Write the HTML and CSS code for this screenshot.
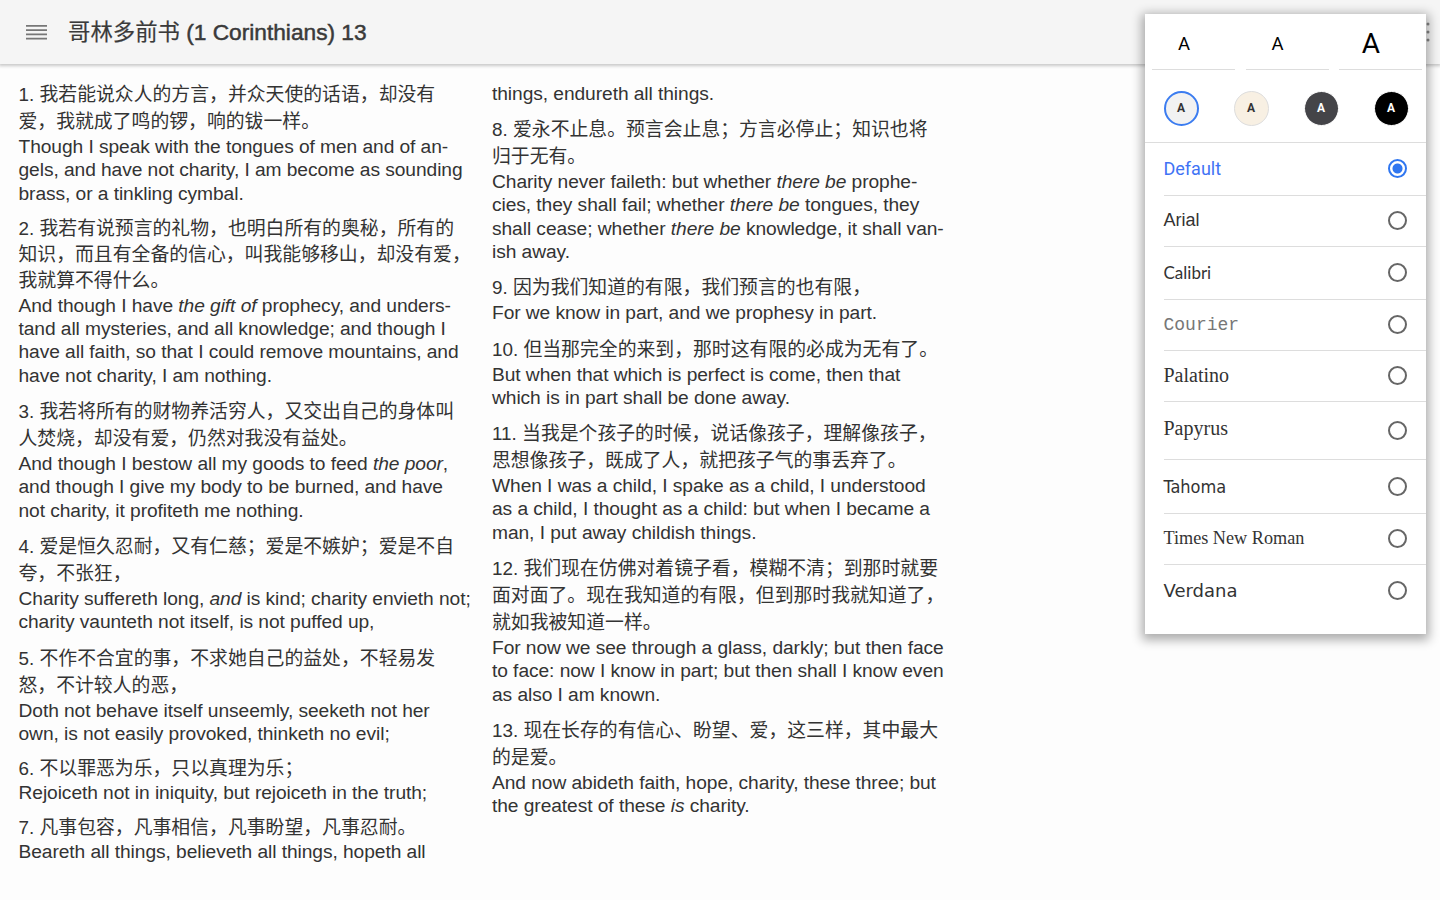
FILE: index.html
```html
<!DOCTYPE html>
<html lang="zh-CN">

<head>
  <meta charset="UTF-8">
  <title>哥林多前书 (1 Corinthians) 13</title>
  <link rel="stylesheet" href="styles.css">
</head>

<body>
  <header class="toolbar">
    <svg class="menu-icon" viewBox="0 0 22 16">
      <path d="M0 1.5h22M0 6h22M0 10.5h22M0 15h22" />
    </svg>
    <h1 class="title"><span class="title-zh">哥林多前书</span> (1 Corinthians) 13</h1>
    <svg class="more-icon" viewBox="0 0 4 22">
      <circle cx="2" cy="3" r="1.5" />
      <circle cx="2" cy="11" r="1.5" />
      <circle cx="2" cy="19" r="1.5" />
    </svg>
  </header>

  <main class="chapter">
    <div class="column">
      <div class="verse">
        <p class="zh">1. 我若能说众人的方言，并众天使的话语，却没有<br>爱，我就成了鸣的锣，响的钹一样。</p>
        <p class="en">Though I speak with the tongues of men and of an-<br>gels, and have not charity, I am become as sounding<br>brass, or a tinkling cymbal.</p>
      </div>
      <div class="verse">
        <p class="zh zh-mid">2. 我若有说预言的礼物，也明白所有的奥秘，所有的<br>知识，而且有全备的信心，叫我能够移山，却没有爱，<br>我就算不得什么。</p>
        <p class="en">And though I have <i>the gift of</i> prophecy, and unders-<br>tand all mysteries, and all knowledge; and though I<br>have all faith, so that I could remove mountains, and<br>have not charity, I am nothing.</p>
      </div>
      <div class="verse">
        <p class="zh">3. 我若将所有的财物养活穷人，又交出自己的身体叫<br>人焚烧，却没有爱，仍然对我没有益处。</p>
        <p class="en">And though I bestow all my goods to feed <i>the poor</i>,<br>and though I give my body to be burned, and have<br>not charity, it profiteth me nothing.</p>
      </div>
      <div class="verse">
        <p class="zh">4. 爱是恒久忍耐，又有仁慈；爱是不嫉妒；爱是不自<br>夸，不张狂，</p>
        <p class="en">Charity suffereth long, <i>and</i> is kind; charity envieth not;<br>charity vaunteth not itself, is not puffed up,</p>
      </div>
      <div class="verse">
        <p class="zh">5. 不作不合宜的事，不求她自己的益处，不轻易发<br>怒，不计较人的恶，</p>
        <p class="en">Doth not behave itself unseemly, seeketh not her<br>own, is not easily provoked, thinketh no evil;</p>
      </div>
      <div class="verse">
        <p class="zh zh-low">6. 不以罪恶为乐，只以真理为乐；</p>
        <p class="en">Rejoiceth not in iniquity, but rejoiceth in the truth;</p>
      </div>
      <div class="verse">
        <p class="zh zh-low">7. 凡事包容，凡事相信，凡事盼望，凡事忍耐。</p>
        <p class="en">Beareth all things, believeth all things, hopeth all</p>
      </div>
    </div>

    <div class="column">
      <div class="verse">
        <p class="en">things, endureth all things.</p>
      </div>
      <div class="verse">
        <p class="zh">8. 爱永不止息。预言会止息；方言必停止；知识也将<br>归于无有。</p>
        <p class="en">Charity never faileth: but whether <i>there be</i> prophe-<br>cies, they shall fail; whether <i>there be</i> tongues, they<br>shall cease; whether <i>there be</i> knowledge, it shall van-<br>ish away.</p>
      </div>
      <div class="verse">
        <p class="zh">9. 因为我们知道的有限，我们预言的也有限，</p>
        <p class="en">For we know in part, and we prophesy in part.</p>
      </div>
      <div class="verse">
        <p class="zh">10. 但当那完全的来到，那时这有限的必成为无有了。</p>
        <p class="en">But when that which is perfect is come, then that<br>which is in part shall be done away.</p>
      </div>
      <div class="verse">
        <p class="zh">11. 当我是个孩子的时候，说话像孩子，理解像孩子，<br>思想像孩子，既成了人，就把孩子气的事丢弃了。</p>
        <p class="en">When I was a child, I spake as a child, I understood<br>as a child, I thought as a child: but when I became a<br>man, I put away childish things.</p>
      </div>
      <div class="verse">
        <p class="zh">12. 我们现在仿佛对着镜子看，模糊不清；到那时就要<br>面对面了。现在我知道的有限，但到那时我就知道了，<br>就如我被知道一样。</p>
        <p class="en">For now we see through a glass, darkly; but then face<br>to face: now I know in part; but then shall I know even<br>as also I am known.</p>
      </div>
      <div class="verse">
        <p class="zh">13. 现在长存的有信心、盼望、爱，这三样，其中最大<br>的是爱。</p>
        <p class="en">And now abideth faith, hope, charity, these three; but<br>the greatest of these <i>is</i> charity.</p>
      </div>
    </div>
  </main>

  <div class="popover">
    <div class="sizes">
      <div class="size">A</div>
      <div class="size">A</div>
      <div class="size size-large">A</div>
    </div>
    <div class="themes">
      <div class="theme theme-white">A</div>
      <div class="theme theme-sepia">A</div>
      <div class="theme theme-gray">A</div>
      <div class="theme theme-black">A</div>
    </div>
    <ul class="fonts">
      <li class="font font-default selected"><span>Default</span><i class="radio"></i></li>
      <li class="font font-arial"><span>Arial</span><i class="radio"></i></li>
      <li class="font font-calibri"><span>Calibri</span><i class="radio"></i></li>
      <li class="font font-courier"><span>Courier</span><i class="radio"></i></li>
      <li class="font font-palatino"><span>Palatino</span><i class="radio"></i></li>
      <li class="font font-papyrus"><span>Papyrus</span><i class="radio"></i></li>
      <li class="font font-tahoma"><span>Tahoma</span><i class="radio"></i></li>
      <li class="font font-times"><span>Times New Roman</span><i class="radio"></i></li>
      <li class="font font-verdana"><span>Verdana</span><i class="radio"></i></li>
    </ul>
  </div>
</body>

</html>
```
FILE: styles.css
```css
* {
  box-sizing: border-box;
}

body {
  margin: 0;
  height: 900px;
  overflow: hidden;
  background: #fdfdfd;
  color: #333;
  font-family: "Liberation Sans", "Noto Sans CJK SC", sans-serif;
}

.toolbar {
  display: flex;
  align-items: center;
  height: 64px;
  padding: 0 10px 0 26px;
  background: #f5f5f5;
  box-shadow: 0 1px 3px 1px #c8c8c8;
}

.menu-icon {
  width: 21px;
  height: 16px;
  margin-right: 21px;
  stroke: #777;
  stroke-width: 1.8;
}

.title {
  margin: 0;
  padding-bottom: 4px;
  font-size: 22.7px;
  font-weight: normal;
  white-space: nowrap;
  color: #3a3a3a;
  -webkit-text-stroke: 0.5px #3a3a3a;
}

.title-zh {
  font-size: 22.4px;
  -webkit-text-stroke: 0.2px #444;
}

.more-icon {
  width: 4px;
  height: 22px;
  margin-left: auto;
  fill: #888;
}

.chapter {
  display: grid;
  grid-template-columns: 473.5px 473.5px;
  padding: 17px 0 0 18.5px;
}

.verse {
  margin-bottom: 11px;
}

.verse p {
  margin: 0;
  white-space: nowrap;
}

.verse .zh {
  font-size: 18.85px;
  line-height: 27px;
}

.verse .zh-mid {
  line-height: 26px;
}

.verse .zh-low {
  line-height: 25px;
}

.verse .en {
  font-size: 19.2px;
  line-height: 23.3px;
  letter-spacing: -0.07px;
}

.column + .column {
  padding-top: 0.8px;
}

/* reading settings */
.popover {
  position: absolute;
  top: 14px;
  left: 1145px;
  width: 281px;
  height: 620px;
  background: #fff;
  box-shadow: 0 3px 10px 3px rgba(0, 0, 0, 0.32);
}

.sizes {
  display: grid;
  grid-template-columns: repeat(3, 83px);
  gap: 10.5px;
  height: 56px;
  padding-left: 7px;
}

.size {
  height: 56px;
  padding-right: 19px;
  border-bottom: 1px solid #ddd;
  color: #000;
  font-family: Roboto, sans-serif;
  font-size: 18.5px;
  line-height: 60px;
  text-align: center;
}

.size-large {
  font-size: 28px;
}

.themes {
  display: flex;
  justify-content: space-between;
  align-items: center;
  height: 73px;
  padding: 4px 17.5px 0 18.5px;
  border-bottom: 1px solid #ddd;
}

.theme {
  width: 35px;
  height: 35px;
  border: 1px solid #ddd;
  border-radius: 50%;
  color: #333;
  font-family: Roboto, sans-serif;
  font-size: 12px;
  font-weight: bold;
  line-height: 33px;
  text-align: center;
}

.theme-white {
  border: 2px solid #3b7cf0;
  background: #f2f2f2;
  line-height: 31px;
}

.theme-sepia {
  background: #f8f0e3;
}

.theme-gray {
  border-color: #fff;
  background: #444448;
  color: #fff;
}

.theme-black {
  border-color: #fff;
  background: #000;
  color: #fff;
}

.fonts {
  margin: 0;
  padding: 0 0 0 18.5px;
  list-style: none;
}

.font {
  display: flex;
  align-items: center;
  justify-content: space-between;
  height: 52px;
  padding-right: 19px;
  padding-bottom: 1px;
  border-bottom: 1px solid #ddd;
  font-size: 18px;
  color: #333;
}

.radio {
  width: 19px;
  height: 19px;
  border: 2px solid #666;
  border-radius: 50%;
}

.selected .radio {
  border-color: #2f76f0;
  background: radial-gradient(circle, #2f76f0 4.5px, #fff 5.5px);
}

.font-default {
  height: 53px;
  font-family: Roboto, sans-serif;
  color: #3f73f5;
}

.font-arial {
  height: 51px;
}

.font-calibri {
  height: 53px;
  font-family: Lato, sans-serif;
  font-size: 17px;
}

.font-courier {
  height: 51px;
  font-family: "Liberation Mono", monospace;
  color: #777;
}

.font-palatino {
  height: 51px;
  font-family: "Liberation Serif", serif;
  font-size: 20px;
}

.font-papyrus {
  height: 58px;
  padding-bottom: 0;
  font-family: "Liberation Serif", serif;
  font-size: 20px;
}

.font-papyrus span {
  padding-bottom: 4px;
}

.font-tahoma {
  height: 54px;
  padding-bottom: 0;
  font-family: "DejaVu Sans Condensed", "DejaVu Sans", sans-serif;
  font-size: 18px;
}

.font-times {
  height: 51px;
  font-family: "Liberation Serif", serif;
  font-size: 18.2px;
}

.font-verdana {
  height: 52px;
  border-bottom: none;
  font-family: "DejaVu Sans", sans-serif;
  font-size: 18px;
}
```
